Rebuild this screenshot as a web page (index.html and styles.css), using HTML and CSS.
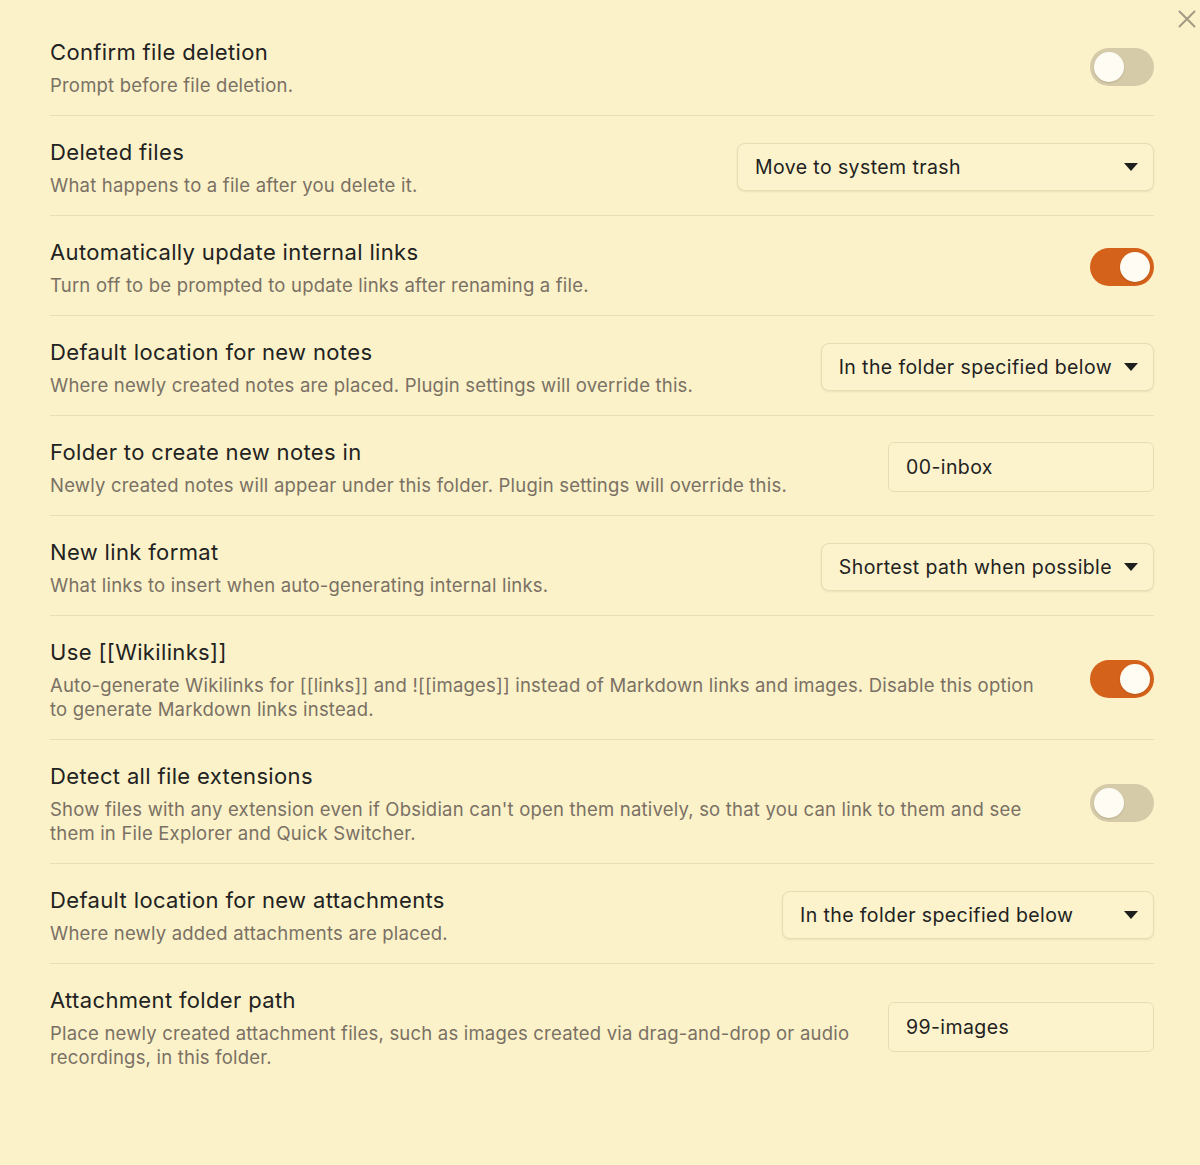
FILE: index.html
```html
<!DOCTYPE html>
<html>
<head>
<meta charset="utf-8">
<link rel="stylesheet" href="styles.css">
</head>
<body>
<div class="modal">
  <button class="close" aria-label="Close">
    <svg width="18" height="18" viewBox="0 0 18 18"><path d="M1.5 1.5L16.5 16.5M16.5 1.5L1.5 16.5" stroke="#a39a86" stroke-width="2" stroke-linecap="round" fill="none"/></svg>
  </button>
  <div class="settings">
    <div class="item">
      <div class="info"><div class="name">Confirm file deletion</div><div class="desc">Prompt before file deletion.</div></div>
      <div class="control"><div class="toggle"><div class="knob"></div></div></div>
    </div>
    <div class="item">
      <div class="info"><div class="name">Deleted files</div><div class="desc">What happens to a file after you delete it.</div></div>
      <div class="control"><div class="dropdown w416"><span>Move to system trash</span><svg class="caret" width="14" height="8" viewBox="0 0 14 8"><path d="M0 0H14L7 8Z" fill="#1e1e1e"/></svg></div></div>
    </div>
    <div class="item">
      <div class="info"><div class="name">Automatically update internal links</div><div class="desc">Turn off to be prompted to update links after renaming a file.</div></div>
      <div class="control"><div class="toggle on"><div class="knob"></div></div></div>
    </div>
    <div class="item">
      <div class="info"><div class="name">Default location for new notes</div><div class="desc">Where newly created notes are placed. Plugin settings will override this.</div></div>
      <div class="control"><div class="dropdown"><span>In the folder specified below</span><svg class="caret" width="14" height="8" viewBox="0 0 14 8"><path d="M0 0H14L7 8Z" fill="#1e1e1e"/></svg></div></div>
    </div>
    <div class="item">
      <div class="info"><div class="name">Folder to create new notes in</div><div class="desc">Newly created notes will appear under this folder. Plugin settings will override this.</div></div>
      <div class="control"><div class="textbox">00-inbox</div></div>
    </div>
    <div class="item">
      <div class="info"><div class="name">New link format</div><div class="desc">What links to insert when auto-generating internal links.</div></div>
      <div class="control"><div class="dropdown"><span>Shortest path when possible</span><svg class="caret" width="14" height="8" viewBox="0 0 14 8"><path d="M0 0H14L7 8Z" fill="#1e1e1e"/></svg></div></div>
    </div>
    <div class="item">
      <div class="info"><div class="name">Use [[Wikilinks]]</div><div class="desc">Auto-generate Wikilinks for [[links]] and ![[images]] instead of Markdown links and images. Disable this option to generate Markdown links instead.</div></div>
      <div class="control"><div class="toggle on"><div class="knob"></div></div></div>
    </div>
    <div class="item">
      <div class="info"><div class="name">Detect all file extensions</div><div class="desc">Show files with any extension even if Obsidian can't open them natively, so that you can link to them and see them in File Explorer and Quick Switcher.</div></div>
      <div class="control"><div class="toggle"><div class="knob"></div></div></div>
    </div>
    <div class="item">
      <div class="info"><div class="name">Default location for new attachments</div><div class="desc">Where newly added attachments are placed.</div></div>
      <div class="control"><div class="dropdown w372"><span>In the folder specified below</span><svg class="caret" width="14" height="8" viewBox="0 0 14 8"><path d="M0 0H14L7 8Z" fill="#1e1e1e"/></svg></div></div>
    </div>
    <div class="item last">
      <div class="info"><div class="name">Attachment folder path</div><div class="desc">Place newly created attachment files, such as images created via drag-and-drop or audio recordings, in this folder.</div></div>
      <div class="control"><div class="textbox">99-images</div></div>
    </div>
  </div>
</div>
</body>
</html>
```
FILE: styles.css
```css
html, body {
  margin: 0;
  padding: 0;
  background: #fbf2c9;
}
body {
  font-family: Inter, "Noto Sans", sans-serif;
  color: #222222;
  height: 1165px;
  overflow: hidden;
}
.modal {
  position: relative;
  padding: 16px 46px 0 50px;
}
.close {
  position: absolute;
  top: 10px;
  right: 4px;
  width: 18px;
  height: 18px;
  border: none;
  background: transparent;
  padding: 0;
  display: flex;
  align-items: center;
  justify-content: center;
}
.settings {
  display: flex;
  flex-direction: column;
}
.item {
  display: flex;
  align-items: center;
  justify-content: space-between;
  gap: 30px;
  padding: 21px 0 18px;
  border-bottom: 1px solid #e9ddb7;
}
.item.last {
  border-bottom: none;
}
.info {
  flex: 1;
  min-width: 0;
}
.name {
  font-size: 22px;
  letter-spacing: 0.35px;
  line-height: 30px;
  margin-bottom: 6px;
  color: #222;
}
.desc {
  font-size: 18.5px;
  letter-spacing: 0.2px;
  line-height: 24px;
  color: #7a7064;
  max-width: 1000px;
}
.control {
  flex: none;
  display: flex;
  align-items: center;
}
.toggle {
  width: 64px;
  height: 38px;
  border-radius: 19px;
  background: #d6cba9;
  display: flex;
  align-items: center;
  padding: 0 4px;
  box-sizing: border-box;
}
.toggle .knob {
  width: 30px;
  height: 30px;
  border-radius: 50%;
  background: #fffdf3;
  box-shadow: 0 1px 2px rgba(0,0,0,0.15);
}
.toggle.on {
  background: #d5621a;
  justify-content: flex-end;
}
.dropdown {
  height: 48px;
  box-sizing: border-box;
  border: 1px solid #e8dcb5;
  border-radius: 8px;
  background: #fcf3cc;
  box-shadow: 0 1px 2px rgba(120,100,50,0.12);
  display: flex;
  align-items: center;
  justify-content: space-between;
  padding: 0 15px 0 17px;
  gap: 12px;
  font-size: 19.5px;
  letter-spacing: 0.4px;
  color: #222;
}
.dropdown.w416 { width: 417px; }
.dropdown.w372 { width: 372px; }
.caret {
  flex: none;
}
.textbox {
  width: 266px;
  height: 50px;
  box-sizing: border-box;
  border: 1px solid #e8dcb5;
  border-radius: 6px;
  background: #fcf3cc;
  display: flex;
  align-items: center;
  padding: 0 17px;
  font-size: 19.5px;
  letter-spacing: 0.4px;
  color: #222;
}
```
